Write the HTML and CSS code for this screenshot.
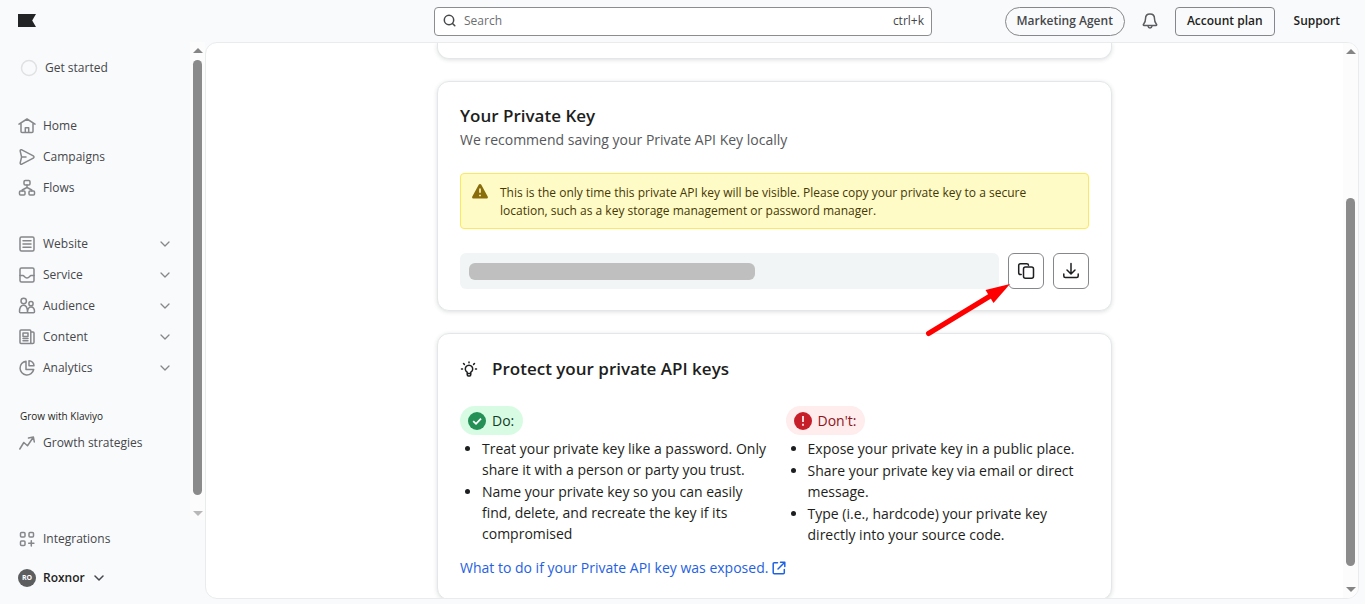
FILE: index.html
```html
<!DOCTYPE html>
<html lang="en">
<head>
<meta charset="utf-8">
<meta name="viewport" content="width=device-width, initial-scale=1">
<title>Your Private Key</title>
<link rel="stylesheet" href="styles.css">
</head>
<body>
<header class="topbar">
  <a class="logo" href="#" aria-label="Klaviyo"><svg width="18" height="13" viewBox="0 0 18 13"><path d="M0 0h18l-3.800 6.500L18 13H0z" fill="#232426"/></svg></a>
  <label class="search">
    <svg class="icon" width="14" height="14" viewBox="0 0 14 14"><circle cx="6" cy="6" r="4.700"/><path d="M9.500 9.500l2.300 2.300"/></svg>
    <input type="search" placeholder="Search" aria-label="Search">
    <span class="shortcut">ctrl+k</span>
  </label>
  <div class="actions">
    <button class="btn agent" type="button">Marketing Agent</button>
    <button class="plain bell" type="button" aria-label="Notifications"><svg class="icon" width="16" height="18" viewBox="0 0 16 18"><path d="M8 2C5.200 2 3.500 4 3.500 6.700c0 3.500-1 4.400-2 5.600-.4.500-.2 1.200.5 1.200h12c.7 0 .9-.7.5-1.200-1-1.200-2-2.100-2-5.600C12.500 4 10.800 2 8 2z"/><path d="M6 14c.2 1.300.9 2 2 2s1.800-.7 2-2"/></svg></button>
    <button class="btn" type="button">Account plan</button>
    <button class="plain support" type="button">Support</button>
  </div>
</header>

<div class="body">
  <aside class="sidebar">
    <div class="side-scroll">
      <nav class="nav">
        <a class="row started" href="#"><svg width="18" height="18" viewBox="0 0 18 18" fill="none"><circle cx="9" cy="9" r="7.500" stroke="#dfe1e3" stroke-width="1.500"/></svg>Get started</a>
        <div class="group first">
          <a class="row" href="#"><svg class="icon" width="18" height="18" viewBox="0 0 18 18"><path d="M1 7.200L9 2l8 5.200M3 6v8.500c0 .6.400 1 1 1h10c.6 0 1-.4 1-1V6M7.300 15.500v-4.700h3.400v4.700"/></svg>Home</a>
          <a class="row" href="#"><svg class="icon" width="18" height="18" viewBox="0 0 18 18"><path d="M2.200 3.100c-.2-1.100.7-1.700 1.600-1.300l11.500 6.100c.9.500.9 1.700 0 2.200L3.800 16.200c-.9.400-1.800-.2-1.600-1.300L3.600 9zM3.600 9H8"/></svg>Campaigns</a>
          <a class="row" href="#"><svg class="icon" width="18" height="18" viewBox="0 0 18 18"><rect x="6" y="1.500" width="6" height="4.500" rx="1.200"/><rect x="1.500" y="12" width="5.500" height="4" rx="1"/><rect x="11" y="12" width="5.500" height="4" rx="1"/><path d="M9 6v2.500M4.200 12v-1L9 8.500l4.800 2.500v1"/></svg>Flows</a>
        </div>
        <div class="group">
          <a class="row" href="#"><svg class="icon" width="18" height="18" viewBox="0 0 18 18"><rect x="2" y="2" width="14" height="14" rx="1.500"/><path d="M5 5.700h8M5 9h8M5 12.300h8"/></svg>Website<svg class="icon chev" width="10" height="6" viewBox="0 0 10 6"><path d="M1 1l4 4 4-4"/></svg></a>
          <a class="row" href="#"><svg class="icon" width="18" height="18" viewBox="0 0 18 18"><rect x="2" y="2" width="14" height="14" rx="1.500"/><path d="M2 9.500h3c1.200 0 1.700 2.500 4 2.500s2.800-2.500 4-2.500h3"/></svg>Service<svg class="icon chev" width="10" height="6" viewBox="0 0 10 6"><path d="M1 1l4 4 4-4"/></svg></a>
          <a class="row" href="#"><svg class="icon" width="18" height="18" viewBox="0 0 18 18"><circle cx="5.700" cy="4" r="2.700"/><circle cx="13" cy="6.700" r="2.100"/><path d="M9.500 15.800h-7c-.6 0-1-.4-1-1 0-4 1.200-6.500 4.200-6.500s3.800 2.500 3.800 7.500zM9.500 15.800h6c.6 0 1-.4 1-1 0-3-1-4.800-3.500-4.800S9.500 11.800 9.500 15.800z"/></svg>Audience<svg class="icon chev" width="10" height="6" viewBox="0 0 10 6"><path d="M1 1l4 4 4-4"/></svg></a>
          <a class="row" href="#"><svg class="icon" width="18" height="18" viewBox="0 0 18 18"><path d="M12.800 15.500V3c0-.6-.4-1-1-1H3c-.6 0-1 .4-1 1v11.500c0 .6.400 1 1 1h11.700c.7 0 1.300-.6 1.300-1.300V5c0-.6-.4-1-1-1h-2.200"/><path d="M5 5h5v3.500H5zM5 10.500h5M5 12.800h5"/></svg>Content<svg class="icon chev" width="10" height="6" viewBox="0 0 10 6"><path d="M1 1l4 4 4-4"/></svg></a>
          <a class="row" href="#"><svg class="icon" width="18" height="18" viewBox="0 0 18 18"><path d="M8 2.200a6.900 6.900 0 1 0 7.700 8.300H8z"/><path d="M11 1.700c2.700 0 5 2.300 5 5h-5z"/></svg>Analytics<svg class="icon chev" width="10" height="6" viewBox="0 0 10 6"><path d="M1 1l4 4 4-4"/></svg></a>
        </div>
        <h2 class="nav-title">Grow with Klaviyo</h2>
        <a class="row" href="#"><svg class="icon" width="18" height="18" viewBox="0 0 18 18"><path d="M1.800 15l4-6.500 3.700 3.200 5.800-8.400M10.500 4l4.900-.9.900 4.800"/></svg>Growth strategies</a>
      </nav>
      <div class="scrollbar side-bar" aria-hidden="true"><i class="up"></i><i class="thumb"></i><i class="down faint"></i></div>
    </div>
    <div class="side-foot">
      <a class="row" href="#"><svg class="icon" width="18" height="18" viewBox="0 0 18 18"><rect x="2.500" y="2.500" width="4.500" height="4.500" rx="1"/><rect x="11" y="2.500" width="4.500" height="4.500" rx="1"/><rect x="2.500" y="11" width="4.500" height="4.500" rx="1"/><path d="M13.300 10.700v5.200M10.700 13.300h5.200"/></svg>Integrations</a>
      <button class="row account" type="button"><span class="avatar">RO</span>Roxnor<svg class="icon" width="10" height="6" viewBox="0 0 10 6"><path d="M1 1l4 4 4-4"/></svg></button>
    </div>
  </aside>

  <main class="panel">
    <div class="content">
      <section class="card stub"></section>

      <section class="card key">
        <h1 class="title">Your Private Key</h1>
        <p class="sub">We recommend saving your Private API Key locally</p>
        <div class="alert" role="alert">
          <svg width="16" height="15" viewBox="0 0 16 15"><path d="M8 0c.6 0 1 .3 1.300.8l6.400 11.600c.6 1-.1 2.100-1.200 2.100h-13c-1.100 0-1.800-1.100-1.200-2.100L6.700.8C7 .3 7.400 0 8 0z" fill="#8a6d0b"/><path d="M8 4.500v4.300M8 10.700v1.600" stroke="#fffbc7" stroke-width="1.600"/></svg>
          <p>This is the only time this private API key will be visible. Please copy your private key to a secure location, such as a key storage management or password manager.</p>
        </div>
        <div class="key-row">
          <div class="key-box"><span class="redacted"></span></div>
          <div class="copy-wrap">
            <button class="btn square" type="button" aria-label="Copy"><svg class="icon" width="18" height="18" viewBox="0 0 18 18"><rect x="6.500" y="5" width="10" height="11.200" rx="2"/><path d="M4.200 12.500H3.500c-1 0-1.800-.8-1.800-1.800V3.500c0-1 .8-1.800 1.800-1.800h6.200c1 0 1.800.6 1.800 1.600"/></svg></button>
            <svg class="arrow" width="86" height="54" viewBox="0 0 86 54" aria-hidden="true"><path d="M3.500 50.500L66 12.500" stroke="#f00" stroke-width="5" stroke-linecap="round"/><path d="M85 1L60.500 7l8 13z" fill="#f00"/></svg>
          </div>
          <button class="btn square" type="button" aria-label="Download"><svg class="icon" width="18" height="18" viewBox="0 0 18 18"><path d="M9 1.500v10M5 8l4 4 4-4M1.800 12v2c0 .9.600 1.500 1.500 1.500h11.400c.9 0 1.500-.6 1.500-1.500v-2"/></svg></button>
        </div>
      </section>

      <section class="card protect">
        <h2 class="title with-icon"><svg class="icon" width="18" height="18" viewBox="0 0 18 18"><path d="M7.200 13.500v-1.300A3.700 3.700 0 1 1 10.800 12.200V13.500M7.200 13.500h3.600v1c0 .9-.5 1.500-1.300 1.500h-1c-.8 0-1.300-.6-1.300-1.500zM9 2v.8M1.500 9h1M15.500 9h1M3.500 3.500l.9.900M14.500 3.500l-.9.900"/></svg>Protect your private API keys</h2>
        <div class="cols">
          <div>
            <h3 class="pill do"><svg width="18" height="18" viewBox="0 0 18 18" fill="none"><circle cx="9" cy="9" r="9" fill="#249056"/><path d="M5.200 9.200L8 11.800l5-5.200" stroke="#fff" stroke-width="1.800"/></svg>Do:</h3>
            <ul class="list">
              <li>Treat your private key like a password. Only share it with a person or party you trust.</li>
              <li>Name your private key so you can easily find, delete, and recreate the key if its compromised</li>
            </ul>
          </div>
          <div>
            <h3 class="pill dont"><svg width="18" height="18" viewBox="0 0 18 18" fill="none"><circle cx="9" cy="9" r="9" fill="#c61f2a"/><path d="M9 4v6M9 11.800v1.900" stroke="#ffecec" stroke-width="1.800"/></svg>Don't:</h3>
            <ul class="list">
              <li>Expose your private key in a public place.</li>
              <li>Share your private key via email or direct message.</li>
              <li>Type (i.e., hardcode) your private key directly into your source code.</li>
            </ul>
          </div>
        </div>
        <a class="link" href="#">What to do if your Private API key was exposed.<svg class="icon" width="14" height="14" viewBox="0 0 14 14"><path d="M5.500 1.700H2.200c-.6 0-1 .4-1 1v9.100c0 .6.400 1 1 1h9.100c.6 0 1-.4 1-1V8.500M8.500 1.200h4.300v4.300M12.500 1.500L6 8"/></svg></a>
      </section>
    </div>
    <div class="scrollbar main-bar" aria-hidden="true"><i class="up"></i><i class="thumb"></i><i class="down"></i></div>
  </main>
</div>
</body>
</html>
```
FILE: styles.css
```css
* { box-sizing: border-box; }

body {
  margin: 0;
  height: 100vh;
  display: flex;
  flex-direction: column;
  overflow: hidden;
  background: #f9fafc;
  color: #1d1e20;
  font: 12px/18px "Open Sans", "Noto Sans", sans-serif;
}

h1, h2, h3, p, ul { margin: 0; padding: 0; }
a { color: inherit; text-decoration: none; }
button, input { font: inherit; color: inherit; background: none; border: 0; padding: 0; }
svg { display: block; flex: none; }

.icon {
  fill: none;
  stroke: currentColor;
  stroke-width: 1.5;
  stroke-linecap: round;
  stroke-linejoin: round;
}

/* Top bar */
.topbar {
  flex: none;
  height: 42px;
  display: grid;
  grid-template-columns: 1fr 498px 1fr;
  align-items: center;
  padding: 0 17px 0 18px;
}
.logo { justify-self: start; padding-bottom: 2px; }
.search {
  display: flex;
  align-items: center;
  gap: 7px;
  height: 29px;
  padding: 0 7px 0 8px;
  background: #fff;
  border: 1px solid #8b8d8f;
  border-radius: 4px;
  color: #45474a;
}
.search input { flex: 1; min-width: 0; outline: 0; }
.search input::placeholder { color: #6c6e71; opacity: 1; }
.actions {
  display: flex;
  align-items: center;
  justify-content: flex-end;
  padding-right: 8px;
}
.btn {
  height: 29px;
  padding: 0 11px;
  border: 1px solid #85878a;
  border-radius: 4px;
  font-weight: 600;
  white-space: nowrap;
}
.agent { border-radius: 15px; color: #45474a; }
.bell { margin: 0 17px; color: #5a5c5f; }
.support { margin-left: 19px; font-weight: 600; }

/* Frame below the top bar */
.body { flex: 1; min-height: 0; display: flex; }

.sidebar { width: 205px; flex: none; display: flex; flex-direction: column; }
.side-scroll { flex: 1; min-height: 0; display: flex; color: #45474a; }
.nav { flex: 1; padding: 10px 16px 0 18px; overflow: hidden; }
.row {
  display: flex;
  align-items: center;
  gap: 7px;
  height: 31px;
  color: #45474a;
  white-space: nowrap;
}
.row > .icon:first-child { color: #85878a; }
.started { padding-left: 2px; }
.chev { margin-left: auto; color: #85878a; margin-right: 4px; stroke-width: 1.3; }
.group { margin-top: 25px; }
.group.first { margin-top: 27px; }
.nav-title {
  margin: 24px 0 2px 2px;
  font-size: 10px;
  line-height: 18px;
  font-weight: 400;
  color: #1d1e20;
}
.side-foot { flex: none; padding: 3px 18px; }
.account { height: 47px; color: #1d1e20; font-weight: 600; }
.account .icon { margin-left: 2px; color: #45474a; }
.avatar {
  width: 18px;
  height: 18px;
  border-radius: 50%;
  background: #5c5d5f;
  color: #fff;
  font-size: 7px;
  line-height: 18px;
  font-weight: 700;
  text-align: center;
}

/* Scroll bars */
.scrollbar {
  flex: none;
  width: 15px;
  display: flex;
  flex-direction: column;
  align-items: center;
  padding: 6px 0;
  background: #fcfcfc;
}
.side-bar { padding-bottom: 4px; }
.up, .down { border: 5px solid transparent; border-top-width: 0; border-bottom: 5px solid #858585; }
.down { border-bottom-width: 0; border-top: 5px solid #858585; }
.faint { border-top-color: #b8b8b8; }
.thumb { width: 9px; border-radius: 5px; background: #8b8b8b; flex: 1; }
.side-bar .thumb { margin: 7px 0 16px; }
.main-bar .thumb { margin: 144px 0 21px; }

/* Main panel */
.panel {
  flex: 1;
  min-width: 0;
  display: flex;
  overflow: hidden;
  margin: 0 6px 5px 0;
  background: #fff;
  border: 1px solid #e9ebed;
  border-radius: 12px;
}
.content {
  flex: 1;
  min-width: 0;
  display: flex;
  flex-direction: column;
  align-items: center;
  gap: 22px;
  overflow: hidden;
}
.card {
  flex: none;
  width: 100%;
  max-width: 675px;
  padding: 22px 22px 21px;
  background: #fff;
  border: 1px solid #e4e7e9;
  border-radius: 12px;
  box-shadow: 0 1px 4px rgba(35, 45, 50, .15);
}
.stub { padding: 0 0 15px; border-top: 0; border-radius: 0 0 12px 12px; }
.title { font-size: 17px; line-height: 24px; font-weight: 600; }
.sub { font-size: 14px; line-height: 24px; color: #56585b; }

.alert {
  display: flex;
  gap: 12px;
  margin: 21px 0 24px;
  padding: 10px 52px 8px 11px;
  background: #fffbc7;
  border: 1px solid #fbe85c;
  border-radius: 4px;
  color: #443804;
}

.key-row { display: flex; gap: 9px; }
.key-box {
  flex: 1;
  display: flex;
  align-items: center;
  padding: 0 9px;
  background: #f1f5f6;
  border-radius: 6px;
}
.redacted { width: 286px; height: 17px; border-radius: 6px; background: #bfbfbf; }
.square {
  width: 36px;
  height: 36px;
  padding: 0;
  border-radius: 6px;
  display: grid;
  place-items: center;
}
.copy-wrap { position: relative; }
.arrow { position: absolute; right: 33px; top: 30px; pointer-events: none; }

.protect { padding-top: 23px; }
.with-icon { display: flex; align-items: center; gap: 14px; }
.cols {
  display: grid;
  grid-template-columns: 51fr 50fr;
  gap: 16px;
  margin-top: 25px;
}
.pill {
  display: inline-flex;
  align-items: center;
  gap: 6px;
  height: 29px;
  padding: 0 9px 0 8px;
  border-radius: 15px;
  font-size: 14px;
  line-height: 21px;
  font-weight: 400;
  vertical-align: top;
}
.do { background: #d8fce3; color: #123b26; }
.dont { background: #ffecec; color: #8c1420; }
.list {
  display: flex;
  flex-direction: column;
  gap: 1px;
  margin-top: 3px;
  padding-left: 22px;
  font-size: 14px;
  line-height: 21px;
}
.link {
  display: inline-flex;
  align-items: center;
  gap: 4px;
  margin-top: 12px;
  font-size: 14px;
  line-height: 21px;
  color: #1f62e0;
}
```
